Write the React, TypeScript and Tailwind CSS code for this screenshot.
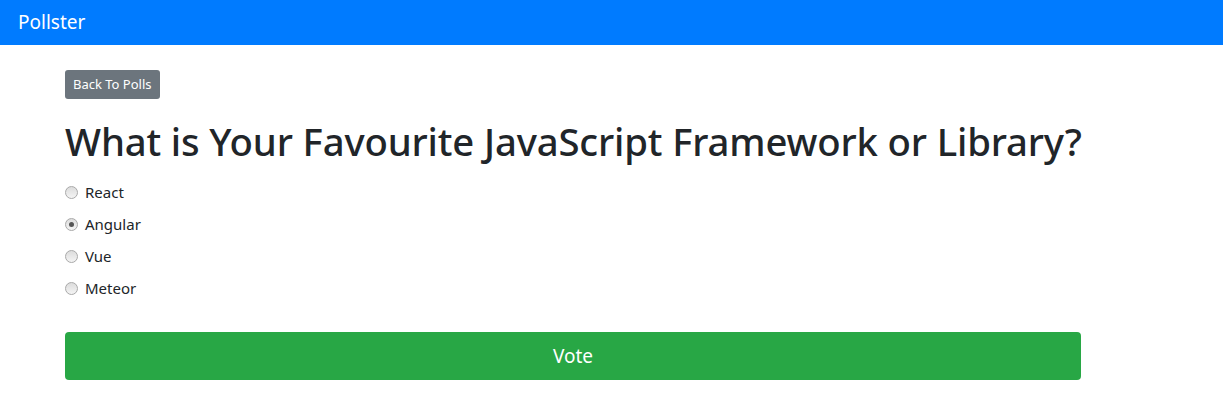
import { useState } from 'react';

const options = ['React', 'Angular', 'Vue', 'Meteor'];

const Radio = ({ checked }: { checked: boolean }) => (
  <span className="w-[13px] h-[13px] rounded-full border border-[#a9a9a9] bg-gradient-to-b from-[#dcdcdc] to-[#f4f4f4] flex items-center justify-center shrink-0">
    {checked && <span className="w-[5px] h-[5px] rounded-full bg-[#555]" />}
  </span>
);

export default function App() {
  const [selected, setSelected] = useState('Angular');

  return (
    <div className="min-h-[416px] bg-white text-[#212529] font-['Noto_Sans',sans-serif]">
      <nav className="h-[45px] bg-[#007bff] flex items-center px-[18px]">
        <span className="text-white text-[19px] leading-none">Pollster</span>
      </nav>

      <main className="pl-[65px] w-[1081px]">
        <button className="mt-[25px] h-[29px] px-[8px] rounded-[3px] bg-[#6c757d] text-white text-[13px]">
          Back To Polls
        </button>

        <h1 className="mt-[18px] text-[38.3px] font-medium leading-[48px] tracking-[-0.15px] whitespace-nowrap">
          What is Your Favourite JavaScript Framework or Library?
        </h1>

        <div className="mt-[11px] flex flex-col">
          {options.map((opt) => (
            <label
              key={opt}
              onClick={() => setSelected(opt)}
              className="h-[32px] flex items-center gap-[7px] text-[15px] cursor-pointer"
            >
              <Radio checked={selected === opt} />
              <span>{opt}</span>
            </label>
          ))}
        </div>

        <button className="mt-[28px] w-full h-[48px] rounded-[4px] bg-[#28a745] text-white text-[19px]">
          Vote
        </button>
      </main>
    </div>
  );
}
